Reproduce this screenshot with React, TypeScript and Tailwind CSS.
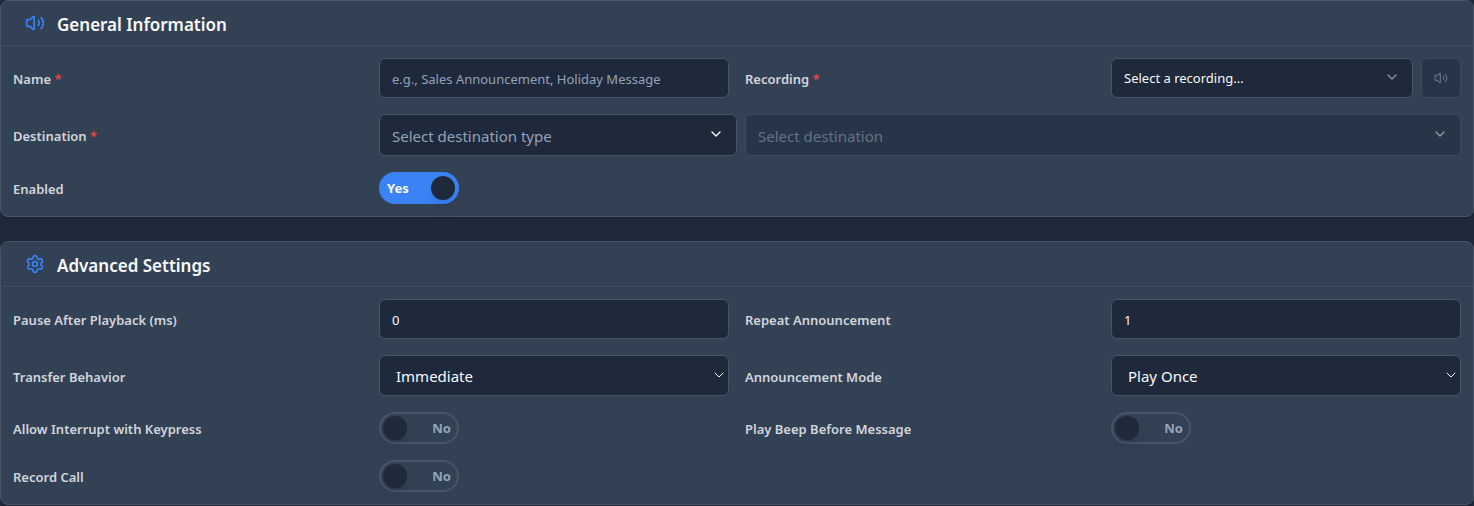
import { ChevronDown, Settings, Volume2, type LucideIcon } from "lucide-react";
import { useState, type ReactNode } from "react";

interface SectionProps {
  title: string;
  icon: LucideIcon;
  children: ReactNode;
}

function Section({ title, icon: Icon, children }: SectionProps) {
  return (
    <section className="rounded-lg border border-[#475569] bg-[#334155] shadow-sm">
      <header className="flex h-[45px] items-center gap-3 border-b border-[#475569]/60 px-6">
        <Icon className="size-5 text-[#3b82f6]" />
        <h2 className="pt-1 text-[17px] leading-6 font-semibold text-[#f8fafc]">{title}</h2>
      </header>
      <div className="grid grid-cols-4 items-center gap-4 p-3">{children}</div>
    </section>
  );
}

interface FieldLabelProps {
  htmlFor: string;
  required?: boolean;
  children: ReactNode;
}

function FieldLabel({ htmlFor, required, children }: FieldLabelProps) {
  return (
    <label htmlFor={htmlFor} className="pt-0.5 text-[13px] leading-5 font-semibold text-[#d1d5db]">
      {children}
      {required && <span className="text-[#ef4444]"> *</span>}
    </label>
  );
}

interface SelectFieldProps {
  id: string;
  options: string[];
  label?: string;
  disabled?: boolean;
  wrapperClass?: string;
  selectClass?: string;
  chevronClass?: string;
}

function SelectField({
  id,
  options,
  label,
  disabled,
  wrapperClass = "",
  selectClass = "",
  chevronClass = "",
}: SelectFieldProps) {
  return (
    <div className={`relative ${wrapperClass}`}>
      <select
        id={id}
        aria-label={label}
        disabled={disabled}
        className={`block w-full appearance-none rounded-md border border-[#475569] bg-[#1e293b] pt-0.5 ${selectClass}`}
      >
        {options.map((option) => (
          <option key={option}>{option}</option>
        ))}
      </select>
      <ChevronDown
        className={`pointer-events-none absolute top-0 bottom-0.5 my-auto size-4 text-[#f8fafc] ${chevronClass}`}
      />
    </div>
  );
}

const inputClass =
  "h-10 w-full rounded-md border border-[#475569] bg-[#1e293b] px-3 pt-0.5 text-[13px] text-[#f8fafc] placeholder:text-[#94a3b8]";

function Toggle({ id, defaultChecked = false }: { id: string; defaultChecked?: boolean }) {
  const [checked, setChecked] = useState(defaultChecked);

  return (
    <div className="relative h-8 w-20">
      <input
        id={id}
        type="checkbox"
        role="switch"
        checked={checked}
        onChange={(e) => setChecked(e.target.checked)}
        className="block size-full cursor-pointer appearance-none rounded-full border-2 border-[#475569] bg-[#334155] checked:border-[#3b82f6] checked:bg-[#3b82f6]"
      />
      <span
        className={`pointer-events-none absolute top-1 size-6 rounded-full bg-[#1e293b] shadow-lg ${checked ? "right-1" : "left-1"}`}
      />
      <span
        className={`pointer-events-none absolute inset-y-0 flex items-center pt-0.5 text-[13px] font-bold ${checked ? "left-2 text-[#f8fafc]" : "right-2 text-[#94a3b8]"}`}
      >
        {checked ? "Yes" : "No"}
      </span>
    </div>
  );
}

export default function App() {
  return (
    <main className="flex min-h-screen flex-col gap-6 bg-[#1e293b] font-['Noto_Sans','Open_Sans',sans-serif]">
      <Section title="General Information" icon={Volume2}>
        <FieldLabel htmlFor="name" required>
          Name
        </FieldLabel>
        <input
          id="name"
          type="text"
          placeholder="e.g., Sales Announcement, Holiday Message"
          className={inputClass}
        />
        <FieldLabel htmlFor="recording" required>
          Recording
        </FieldLabel>
        <div className="flex gap-2">
          <SelectField
            id="recording"
            options={["Select a recording..."]}
            wrapperClass="flex-1"
            selectClass="h-10 px-3 text-[13px] text-[#f8fafc]"
            chevronClass="right-[13px] opacity-50"
          />
          <button
            type="button"
            disabled
            aria-label="Play recording"
            className="flex size-10 items-center justify-center rounded-md border border-[#475569] bg-[#1e293b] text-[#94a3b8] opacity-50"
          >
            <Volume2 className="size-3.5" />
          </button>
        </div>

        <FieldLabel htmlFor="destination-type" required>
          Destination
        </FieldLabel>
        <div className="col-span-3 flex gap-2">
          <SelectField
            id="destination-type"
            options={["Select destination type"]}
            wrapperClass="flex-1"
            selectClass="h-[42px] px-3 text-[15px] text-[#94a3b8]"
            chevronClass="right-[13px]"
          />
          <SelectField
            id="destination"
            label="Destination"
            options={["Select destination"]}
            disabled
            wrapperClass="flex-2 opacity-50"
            selectClass="h-[42px] px-3 text-[15px] text-[#94a3b8]"
            chevronClass="right-[13px]"
          />
        </div>

        <FieldLabel htmlFor="enabled">Enabled</FieldLabel>
        <Toggle id="enabled" defaultChecked />
      </Section>

      <Section title="Advanced Settings" icon={Settings}>
        <FieldLabel htmlFor="pause">Pause After Playback (ms)</FieldLabel>
        <input id="pause" type="text" inputMode="numeric" defaultValue="0" className={inputClass} />
        <FieldLabel htmlFor="repeat">Repeat Announcement</FieldLabel>
        <input id="repeat" type="text" inputMode="numeric" defaultValue="1" className={inputClass} />

        <FieldLabel htmlFor="transfer">Transfer Behavior</FieldLabel>
        <SelectField
          id="transfer"
          options={["Immediate"]}
          selectClass="h-[41px] px-4 text-[15px] text-[#f8fafc]"
          chevronClass="right-0.5 stroke-[1.5]"
        />
        <FieldLabel htmlFor="mode">Announcement Mode</FieldLabel>
        <SelectField
          id="mode"
          options={["Play Once"]}
          selectClass="h-[41px] px-4 text-[15px] text-[#f8fafc]"
          chevronClass="right-0.5 stroke-[1.5]"
        />

        <FieldLabel htmlFor="interrupt">Allow Interrupt with Keypress</FieldLabel>
        <Toggle id="interrupt" />
        <FieldLabel htmlFor="beep">Play Beep Before Message</FieldLabel>
        <Toggle id="beep" />

        <FieldLabel htmlFor="record">Record Call</FieldLabel>
        <Toggle id="record" />
      </Section>
    </main>
  );
}
